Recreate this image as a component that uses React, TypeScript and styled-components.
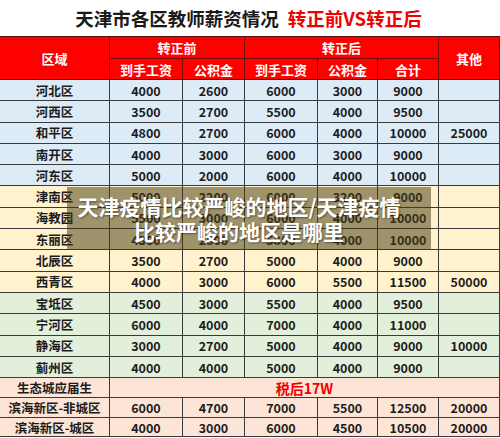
import React from "react";
import styled, { createGlobalStyle } from "styled-components";

const Global = createGlobalStyle`
  html, body { margin: 0; padding: 0; background: #ffffff; overflow: hidden; }
  body { font-family: "Noto Sans CJK SC", "Noto Sans", sans-serif; }
`;

const Page = styled.div`
  position: relative;
  width: 500px;
  height: 438px;
  overflow: hidden;
  background: #ffffff;
`;

const Title = styled.h1`
  margin: 0;
  height: 37px;
  display: flex;
  align-items: center;
  justify-content: center;
  gap: 9px;
  font-size: 18.5px;
  font-weight: 700;
  color: #1a1a1a;
  border-bottom: 1px solid #5a1010;
  box-sizing: border-box;
  padding-right: 3px;
`;

const TitleRed = styled.span`
  color: #f00000;
`;

const Grid = styled.div`
  display: grid;
  grid-template-columns: 110px 73px 62px 73px 60px 61px 61px;
  grid-template-rows: 22px 21px repeat(14, 21.3px) 20px 20px 19px;
`;

type Tone = "red" | "blue" | "yellow" | "green" | "peach";

const bg: Record<Tone, string> = {
  red: "#ff0000",
  blue: "#ddebf7",
  yellow: "#fff2cc",
  green: "#e2efda",
  peach: "#fce4d6",
};

const Cell = styled.div<{ $tone: Tone; $col?: string; $row?: string; $accent?: boolean }>`
  box-sizing: border-box;
  display: flex;
  align-items: center;
  justify-content: center;
  background: ${(p) => bg[p.$tone]};
  border-right: 1px solid ${(p) => (p.$tone === "red" ? "#7c0a0a" : "#3a3a3a")};
  border-bottom: 1px solid ${(p) => (p.$tone === "red" ? "#7c0a0a" : "#3a3a3a")};
  color: ${(p) => (p.$tone === "red" ? "#ffffff" : p.$accent ? "#f00000" : "#1c1c1c")};
  font-size: ${(p) => (p.$tone === "red" ? "13px" : p.$accent ? "14px" : "12.5px")};
  font-weight: 700;
  white-space: nowrap;
  ${(p) => (p.$col ? `grid-column: ${p.$col};` : "")}
  ${(p) => (p.$row ? `grid-row: ${p.$row};` : "")}
`;

const Overlay = styled.div`
  position: absolute;
  left: 67px;
  top: 187px;
  width: 364px;
  height: 63px;
  box-sizing: border-box;
  padding-right: 20px;
  display: flex;
  align-items: center;
  justify-content: center;
  text-align: center;
  background: rgba(70, 60, 20, 0.52);
  color: #ffffff;
  font-size: 21px;
  font-weight: 700;
  line-height: 25px;
  text-shadow: 1px 1px 2px rgba(0, 0, 0, 0.45);
`;

type Row = { tone: Tone; name: string; v: string[] };

const rows: Row[] = [
  { tone: "blue", name: "河北区", v: ["4000", "2600", "6000", "3000", "9000", ""] },
  { tone: "blue", name: "河西区", v: ["3500", "2700", "5500", "4000", "9500", ""] },
  { tone: "blue", name: "和平区", v: ["4800", "2700", "6000", "4000", "10000", "25000"] },
  { tone: "blue", name: "南开区", v: ["4000", "3000", "6000", "3000", "9000", ""] },
  { tone: "blue", name: "河东区", v: ["5000", "2000", "6000", "4000", "10000", ""] },
  { tone: "yellow", name: "津南区", v: ["5000", "2200", "6000", "3200", "9000", ""] },
  { tone: "yellow", name: "海教园", v: ["5500", "3000", "6000", "4000", "10000", ""] },
  { tone: "yellow", name: "东丽区", v: ["4300", "2800", "5800", "4000", "10000", ""] },
  { tone: "yellow", name: "北辰区", v: ["3500", "2700", "5000", "4000", "9000", ""] },
  { tone: "yellow", name: "西青区", v: ["4000", "3000", "6000", "5500", "11500", "50000"] },
  { tone: "green", name: "宝坻区", v: ["4500", "3000", "5500", "4000", "9500", ""] },
  { tone: "green", name: "宁河区", v: ["6000", "4000", "7000", "4000", "11000", ""] },
  { tone: "green", name: "静海区", v: ["3000", "2700", "5000", "4000", "9000", "10000"] },
  { tone: "green", name: "蓟州区", v: ["4000", "4000", "5000", "4000", "9000", ""] },
];

const tail: Row[] = [
  { tone: "peach", name: "滨海新区-非城区", v: ["6000", "4700", "7000", "5500", "12500", "20000"] },
  { tone: "peach", name: "滨海新区-城区", v: ["4000", "3000", "6000", "4500", "10500", "20000"] },
];

const renderRow = (r: Row) => (
  <React.Fragment key={r.name}>
    <Cell $tone={r.tone}>{r.name}</Cell>
    {r.v.map((x, i) => (
      <Cell key={i} $tone={r.tone}>
        {x}
      </Cell>
    ))}
  </React.Fragment>
);

export default function App() {
  return (
    <Page>
      <Global />
      <Title>
        <span>天津市各区教师薪资情况</span>
        <TitleRed>转正前VS转正后</TitleRed>
      </Title>
      <Grid>
        <Cell $tone="red" $col="1" $row="1 / 3">区域</Cell>
        <Cell $tone="red" $col="2 / 4" $row="1">转正前</Cell>
        <Cell $tone="red" $col="4 / 7" $row="1">转正后</Cell>
        <Cell $tone="red" $col="7" $row="1 / 3">其他</Cell>
        <Cell $tone="red" $col="2" $row="2">到手工资</Cell>
        <Cell $tone="red" $col="3" $row="2">公积金</Cell>
        <Cell $tone="red" $col="4" $row="2">到手工资</Cell>
        <Cell $tone="red" $col="5" $row="2">公积金</Cell>
        <Cell $tone="red" $col="6" $row="2">合计</Cell>
        {rows.map(renderRow)}
        <Cell $tone="peach">生态城应届生</Cell>
        <Cell $tone="peach" $col="2 / 8" $accent>
          税后17W
        </Cell>
        {tail.map(renderRow)}
      </Grid>
      <Overlay>
        天津疫情比较严峻的地区/天津疫情
        <br />
        比较严峻的地区是哪里
      </Overlay>
    </Page>
  );
}
